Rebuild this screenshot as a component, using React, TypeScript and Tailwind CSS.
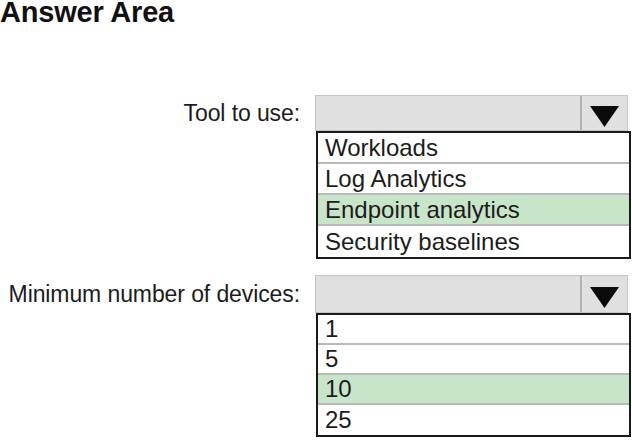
type DropdownProps = {
  label: string;
  options: string[];
  selected: number;
  selectHeight: string;
  rowHeight: string;
};

function Dropdown({ label, options, selected, selectHeight, rowHeight }: DropdownProps) {
  return (
    <div className="flex items-start">
      <div className={`flex w-[300px] items-center justify-end text-[23px] tracking-[-0.1px] ${selectHeight}`}>
        {label}
      </div>
      <div className="ml-[15px] flex w-[316px] flex-col">
        <div className={`flex w-[313px] border border-[#c4c4c4] bg-[#e0e0e0] ${selectHeight}`}>
          <div className="flex-1" />
          <div className="flex w-[47px] items-center justify-center border-l-2 border-[#b4b4b4] pt-[7px]">
            <svg width="29" height="21" viewBox="0 0 29 21">
              <polygon points="0,0 29,0 14.5,21" fill="#0a0a0a" />
            </svg>
          </div>
        </div>
        <div className="ml-[1px] w-[315px] border-2 border-[#1a1a1a] bg-white">
          {options.map((opt, i) => (
            <div
              key={opt}
              className={`flex items-center pl-[7px] text-[24px] leading-none ${rowHeight} ${
                i < options.length - 1 ? 'border-b-2 border-[#b9b9b9]' : ''
              } ${i === selected ? 'bg-[#c8e5c9]' : 'bg-white'}`}
            >
              {opt}
            </div>
          ))}
        </div>
      </div>
    </div>
  );
}

export default function App() {
  return (
    <div className="h-[440px] w-[632px] overflow-hidden bg-white font-['Liberation_Sans',Arial,sans-serif] text-[#1c1c1c]">
      <h1 className="mt-[-1px] text-[29px] font-bold leading-[27px] tracking-[-0.2px] text-[#111]">Answer Area</h1>
      <div className="mt-[69px] flex flex-col gap-[16px]">
        <Dropdown
          label="Tool to use:"
          options={['Workloads', 'Log Analytics', 'Endpoint analytics', 'Security baselines']}
          selected={2}
          selectHeight="h-[36px]"
          rowHeight="h-[31px]"
        />
        <Dropdown
          label="Minimum number of devices:"
          options={['1', '5', '10', '25']}
          selected={2}
          selectHeight="h-[38px]"
          rowHeight="h-[30px]"
        />
      </div>
    </div>
  );
}
